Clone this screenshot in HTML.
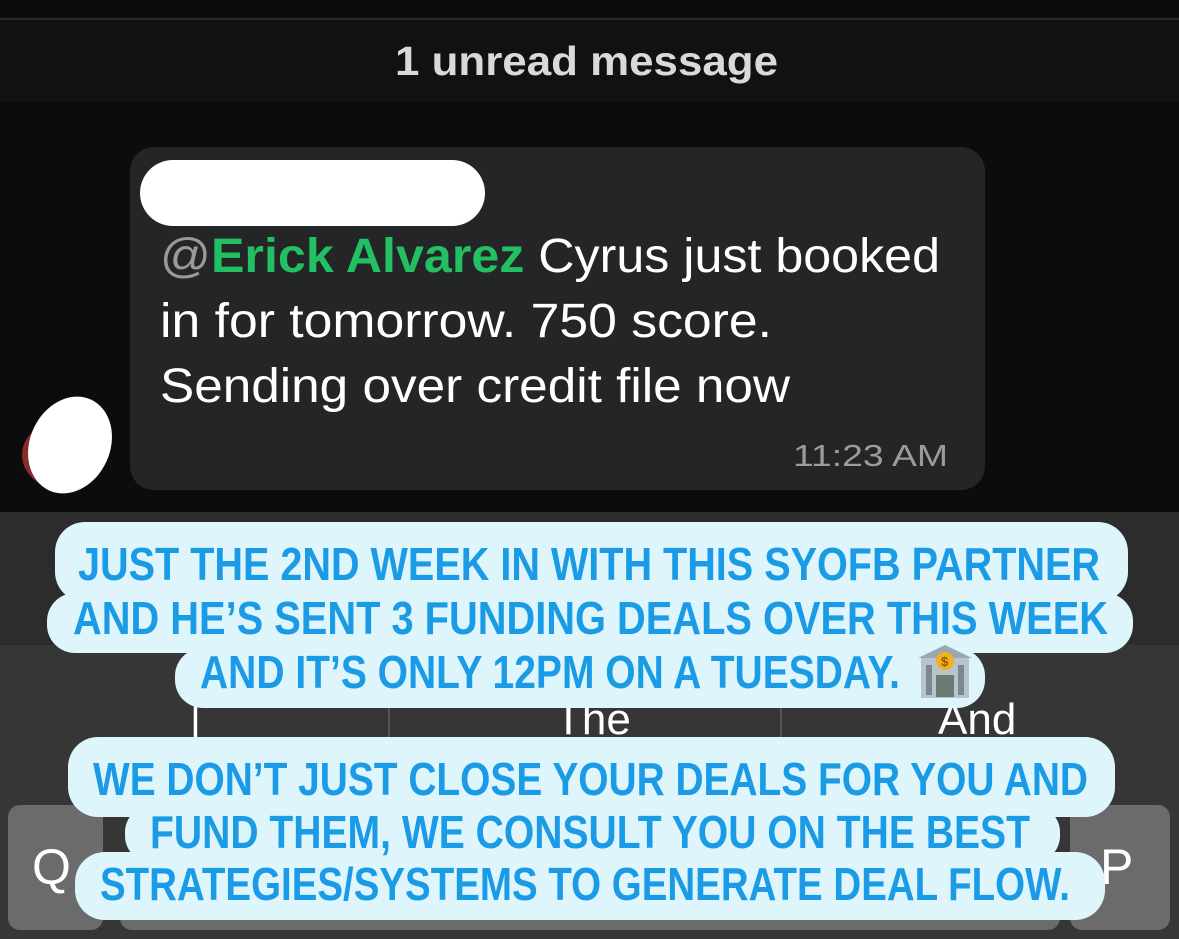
<!DOCTYPE html>
<html><head><meta charset="utf-8"><style>
body{margin:0;width:1179px;height:939px;overflow:hidden;background:#0b0b0b;position:relative;font-family:"Liberation Sans",sans-serif}
.abs{position:absolute}
</style></head><body>
<div class="abs" style="left:0;top:0;width:1179px;height:512px;background:#0c0c0c"></div>
<div class="abs" style="left:0;top:18px;width:1179px;height:2px;background:#2a2a2a"></div>
<div class="abs" style="left:0;top:20px;width:1179px;height:82px;background:#111"></div>
<div class="abs" style="left:130px;top:147px;width:855px;height:343px;background:#232526;border-radius:24px"></div>
<div class="abs" style="left:140px;top:160px;width:345px;height:66px;background:#fff;border-radius:33px"></div>
<div class="abs" style="left:22px;top:420px;width:84px;height:70px;background:#8a2b2b;border-radius:50%"></div>
<div class="abs" style="left:30px;top:395px;width:80px;height:100px;background:#fff;border-radius:50%;transform:rotate(25deg)"></div>
<div class="abs" style="left:0;top:512px;width:1179px;height:427px;background:#2c2c2c"></div>
<div class="abs" style="left:0;top:645px;width:1179px;height:294px;background:#363636"></div>
<div class="abs" style="left:388px;top:690px;width:2px;height:50px;background:#555"></div>
<div class="abs" style="left:780px;top:690px;width:2px;height:50px;background:#555"></div>
<div class="abs" style="left:190px;top:698px;color:#fff;font-size:42px">|</div>
<div class="abs" style="left:555px;top:695px;color:#fff;font-size:44px">The</div>
<div class="abs" style="left:938px;top:695px;color:#fff;font-size:44px">And</div>
<div class="abs" style="left:8px;top:805px;width:95px;height:125px;background:#6b6b6b;border-radius:12px"></div>
<div class="abs" style="left:1070px;top:805px;width:100px;height:125px;background:#6b6b6b;border-radius:12px"></div>
<div class="abs" style="left:120px;top:880px;width:940px;height:50px;background:#6b6b6b;border-radius:12px"></div>
<div class="abs" style="left:32px;top:838px;color:#fff;font-size:50px">Q</div>
<div class="abs" style="left:1100px;top:838px;color:#fff;font-size:50px">P</div>
<svg class="abs" style="left:0;top:0" width="1179" height="939">
<text x="395" y="75" textLength="383" lengthAdjust="spacingAndGlyphs" font-size="41" font-weight="bold" fill="#d9d9d9" font-family="Liberation Sans, sans-serif">1 unread message</text>
<g font-family="Liberation Sans, sans-serif" font-size="48" fill="#fff">
<text x="160" y="272" textLength="780" lengthAdjust="spacingAndGlyphs"><tspan fill="#9a9a9a">@</tspan><tspan fill="#22c063" font-weight="bold">Erick Alvarez</tspan> Cyrus just booked</text>
<text x="160" y="337" textLength="612" lengthAdjust="spacingAndGlyphs">in for tomorrow. 750 score.</text>
<text x="160" y="402" textLength="630" lengthAdjust="spacingAndGlyphs">Sending over credit file now</text>
<text x="793" y="466" textLength="155" lengthAdjust="spacingAndGlyphs" font-size="31" fill="#9b9b9b">11:23 AM</text>
</g>
<g fill="#dff5fc">
<rect x="55" y="522" width="1073" height="80" rx="30"/>
<rect x="47" y="593" width="1086" height="60" rx="28"/>
<rect x="175" y="648" width="810" height="60" rx="28"/>
<rect x="68" y="737" width="1047" height="80" rx="30"/>
<rect x="125" y="806" width="935" height="56" rx="26"/>
<rect x="75" y="852" width="1030" height="68" rx="30"/>
</g>
<g fill="#1b9be6" font-family="Liberation Sans, sans-serif" font-weight="bold" font-size="46">
<text x="78" y="580" textLength="1022" lengthAdjust="spacingAndGlyphs">JUST THE 2ND WEEK IN WITH THIS SYOFB PARTNER</text>
<text x="73" y="634" textLength="1035" lengthAdjust="spacingAndGlyphs">AND HE’S SENT 3 FUNDING DEALS OVER THIS WEEK</text>
<text x="200" y="688" textLength="700" lengthAdjust="spacingAndGlyphs">AND IT’S ONLY 12PM ON A TUESDAY.</text>
<text x="93" y="795" textLength="995" lengthAdjust="spacingAndGlyphs">WE DON’T JUST CLOSE YOUR DEALS FOR YOU AND</text>
<text x="150" y="848" textLength="880" lengthAdjust="spacingAndGlyphs">FUND THEM, WE CONSULT YOU ON THE BEST</text>
<text x="100" y="900" textLength="970" lengthAdjust="spacingAndGlyphs">STRATEGIES/SYSTEMS TO GENERATE DEAL FLOW.</text>
</g>
<g transform="translate(918,643)">
<polygon points="0,15 27,2 54,15" fill="#9aa7b0"/>
<rect x="3" y="15" width="48" height="40" fill="#b8c4cc"/>
<rect x="8" y="22" width="6" height="30" fill="#7a8890"/>
<rect x="40" y="22" width="6" height="30" fill="#7a8890"/>
<rect x="18" y="32" width="18" height="22" fill="#6a7a70"/>
<circle cx="27" cy="18" r="9" fill="#f2b01e"/>
<text x="23" y="23" font-size="13" font-weight="bold" fill="#8a5a00" font-family="Liberation Sans">$</text>
</g>
</svg>
</body></html>
